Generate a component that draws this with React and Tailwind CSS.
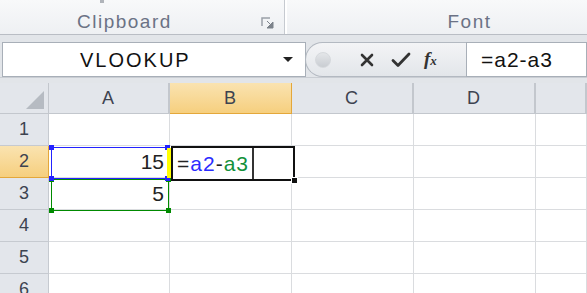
import React from "react";

const cols = ["A", "B", "C", "D", ""];
const rows = [1, 2, 3, 4, 5, 6];

function Launcher() {
  return (
    <svg width="14" height="12" viewBox="0 0 14 12">
      <path d="M1 9V1h8" fill="none" stroke="#9aa0a8" strokeWidth="1.5" />
      <path d="M6 4l5 5M12 5v6H6z" fill="#7d838b" stroke="#7d838b" strokeWidth="1" />
    </svg>
  );
}

function Cell({ r, c }) {
  let text = null;
  if (c === "A" && r === 2) text = "15";
  if (c === "A" && r === 3) text = "5";
  return (
    <div className="h-[32px] border-r border-b border-[#dadcdf] bg-white flex items-center justify-end pr-[5px] text-[21px] text-[#222]">
      {text}
    </div>
  );
}

// small handles sitting on the corners of a range outline
function Handles({ color }) {
  return (
    <>
      <div className={"absolute -left-[3px] -top-[3px] w-[5px] h-[5px] " + color} />
      <div className={"absolute -right-[3px] -top-[3px] w-[5px] h-[5px] " + color} />
      <div className={"absolute -left-[3px] -bottom-[3px] w-[5px] h-[5px] " + color} />
      <div className={"absolute -right-[3px] -bottom-[3px] w-[5px] h-[5px] " + color} />
    </>
  );
}

export default function App() {
  return (
    <div className="w-[587px] h-[293px] overflow-hidden bg-white" style={{ fontFamily: '"Liberation Sans", Arial, sans-serif' }}>
      {/* ribbon */}
      <div className="h-[35px] flex bg-gradient-to-b from-[#f8f9fa] to-[#eef0f3] border-b border-[#b9bdc4]">
        <div className="w-[285px] flex items-start pt-[12px] border-r border-[#c6cad0]">
          <div className="w-[104px] h-[3px] -mt-[12px] flex justify-end">
            <div className="w-[4px] h-[3px] bg-[#b0b4ba]" />
          </div>
          <span className="leading-none text-[19px] tracking-[1.5px] text-[#6b7285] ml-[-27px]">Clipboard</span>
          <div className="ml-auto mr-[9px] mt-[5px]">
            <Launcher />
          </div>
        </div>
        <div className="w-[2px] bg-white" />
        <div className="flex-1 flex items-start justify-center pt-[12px]">
          <span className="leading-none text-[19px] tracking-[1.5px] text-[#6b7285] ml-[65px]">Font</span>
        </div>
      </div>
      <div className="h-[7px] bg-[#e2e5e9]" />
      {/* formula bar */}
      <div className="h-[35px] flex bg-[#e2e5e9]">
        <div className="w-[304px] ml-[2px] bg-white border border-[#a8afb8] flex items-center">
          <span className="text-[20px] tracking-[2px] text-[#111] ml-[77px]">VLOOKUP</span>
          <div className="ml-auto mr-[12px] w-0 h-0 border-l-[5px] border-r-[5px] border-t-[5px] border-l-transparent border-r-transparent border-t-[#222]" />
        </div>
        <div className="w-[161px] -ml-[1px] flex items-center rounded-l-[18px] border border-r-0 border-[#b3b9c1] bg-gradient-to-b from-[#f3f4f6] to-[#e3e6ea]">
          <div className="w-[16px] h-[16px] rounded-full ml-[9px] bg-gradient-to-b from-[#e4e6e9] to-[#c9cdd2] border border-[#d6d9dd]" />
          <svg width="16" height="16" viewBox="0 0 16 16" className="ml-[28px]">
            <path d="M3 3l10 10M13 3L3 13" stroke="#333" strokeWidth="2.6" strokeLinecap="round" />
          </svg>
          <svg width="20" height="16" viewBox="0 0 20 16" className="ml-[16px]">
            <path d="M2 8.5l5 5L18 2" fill="none" stroke="#333" strokeWidth="2.8" strokeLinecap="round" strokeLinejoin="round" />
          </svg>
          <span className="ml-[13px] text-[19px] italic font-bold text-[#333]" style={{ fontFamily: '"Liberation Serif", serif' }}>
            f<span className="text-[13px]">x</span>
          </span>
        </div>
        <div className="flex-1 bg-white border border-[#a8afb8] flex items-center">
          <span className="text-[21px] tracking-[1px] text-[#111] ml-[14px]">=a2-a3</span>
        </div>
      </div>
      <div className="h-[6px] bg-[#e2e5e9] border-t border-[#c9cdd3]" />
      {/* grid */}
      <div className="relative">
        <div className="grid grid-cols-[49px_121px_122px_122px_122px_1fr]">
          <div className="h-[31px] bg-[#e3e6eb] border-r border-b border-[#c3c7cd] flex items-end justify-end pr-[4px] pb-[4px]">
            <svg width="18" height="18" viewBox="0 0 18 18">
              <path d="M18 0V18H0z" fill="#b6bbc2" />
            </svg>
          </div>
          {cols.map((c) => (
            <div
              key={c}
              className={
                c === "B"
                  ? "h-[31px] bg-gradient-to-b from-[#fae3b0] to-[#f6cf7e] border-r border-b border-[#e4a73a] flex items-center justify-center text-[18px] tracking-[1px] text-[#3d4350]"
                  : "h-[31px] bg-[#e3e6eb] border-r-2 border-b border-[#c3c7cd] flex items-center justify-center text-[18px] tracking-[1px] text-[#3d4350]"
              }
            >
              {c}
            </div>
          ))}
          {rows.map((r) => (
            <React.Fragment key={r}>
              <div
                className={
                  r === 2
                    ? "h-[32px] bg-gradient-to-b from-[#fae3b0] to-[#f6cf7e] border-r border-b border-[#e4a73a] flex items-center justify-center text-[18px] text-[#3d4350]"
                    : "h-[32px] bg-[#e3e6eb] border-r border-b border-[#c6cad0] flex items-center justify-center text-[18px] text-[#3d4350]"
                }
              >
                {r}
              </div>
              {cols.map((c) => (
                <Cell key={c} r={r} c={c} />
              ))}
            </React.Fragment>
          ))}
        </div>
        {/* range outlines drawn over the cells */}
        <div className="absolute left-[51px] top-[96px] w-[118px] h-[32px] border border-[#008a00]">
          <Handles color="bg-[#008a00]" />
        </div>
        <div className="absolute left-[51px] top-[64px] w-[117px] h-[32px] border border-[#2323ff]">
          <Handles color="bg-[#2323ff]" />
          <div className="absolute -right-[4px] top-0 w-[4px] h-[30px] bg-[#ffff00]" />
        </div>
        {/* active cell in edit mode */}
        <div className="absolute left-[171px] top-[63px] w-[124px] h-[35px] border-2 border-[#111] flex items-center bg-white">
          <span className="ml-[4px] text-[21px] tracking-[1px]">
            <span className="text-[#222]">=</span>
            <span className="text-[#2b2bff]">a2</span>
            <span className="text-[#222]">-</span>
            <span className="text-[#13913a]">a3</span>
          </span>
          <div className="ml-[3px] self-stretch w-[2px] bg-[#333]" />
          <div className="absolute -right-[5px] -bottom-[5px] w-[7px] h-[7px] bg-[#111] border border-white" />
        </div>
      </div>
    </div>
  );
}
